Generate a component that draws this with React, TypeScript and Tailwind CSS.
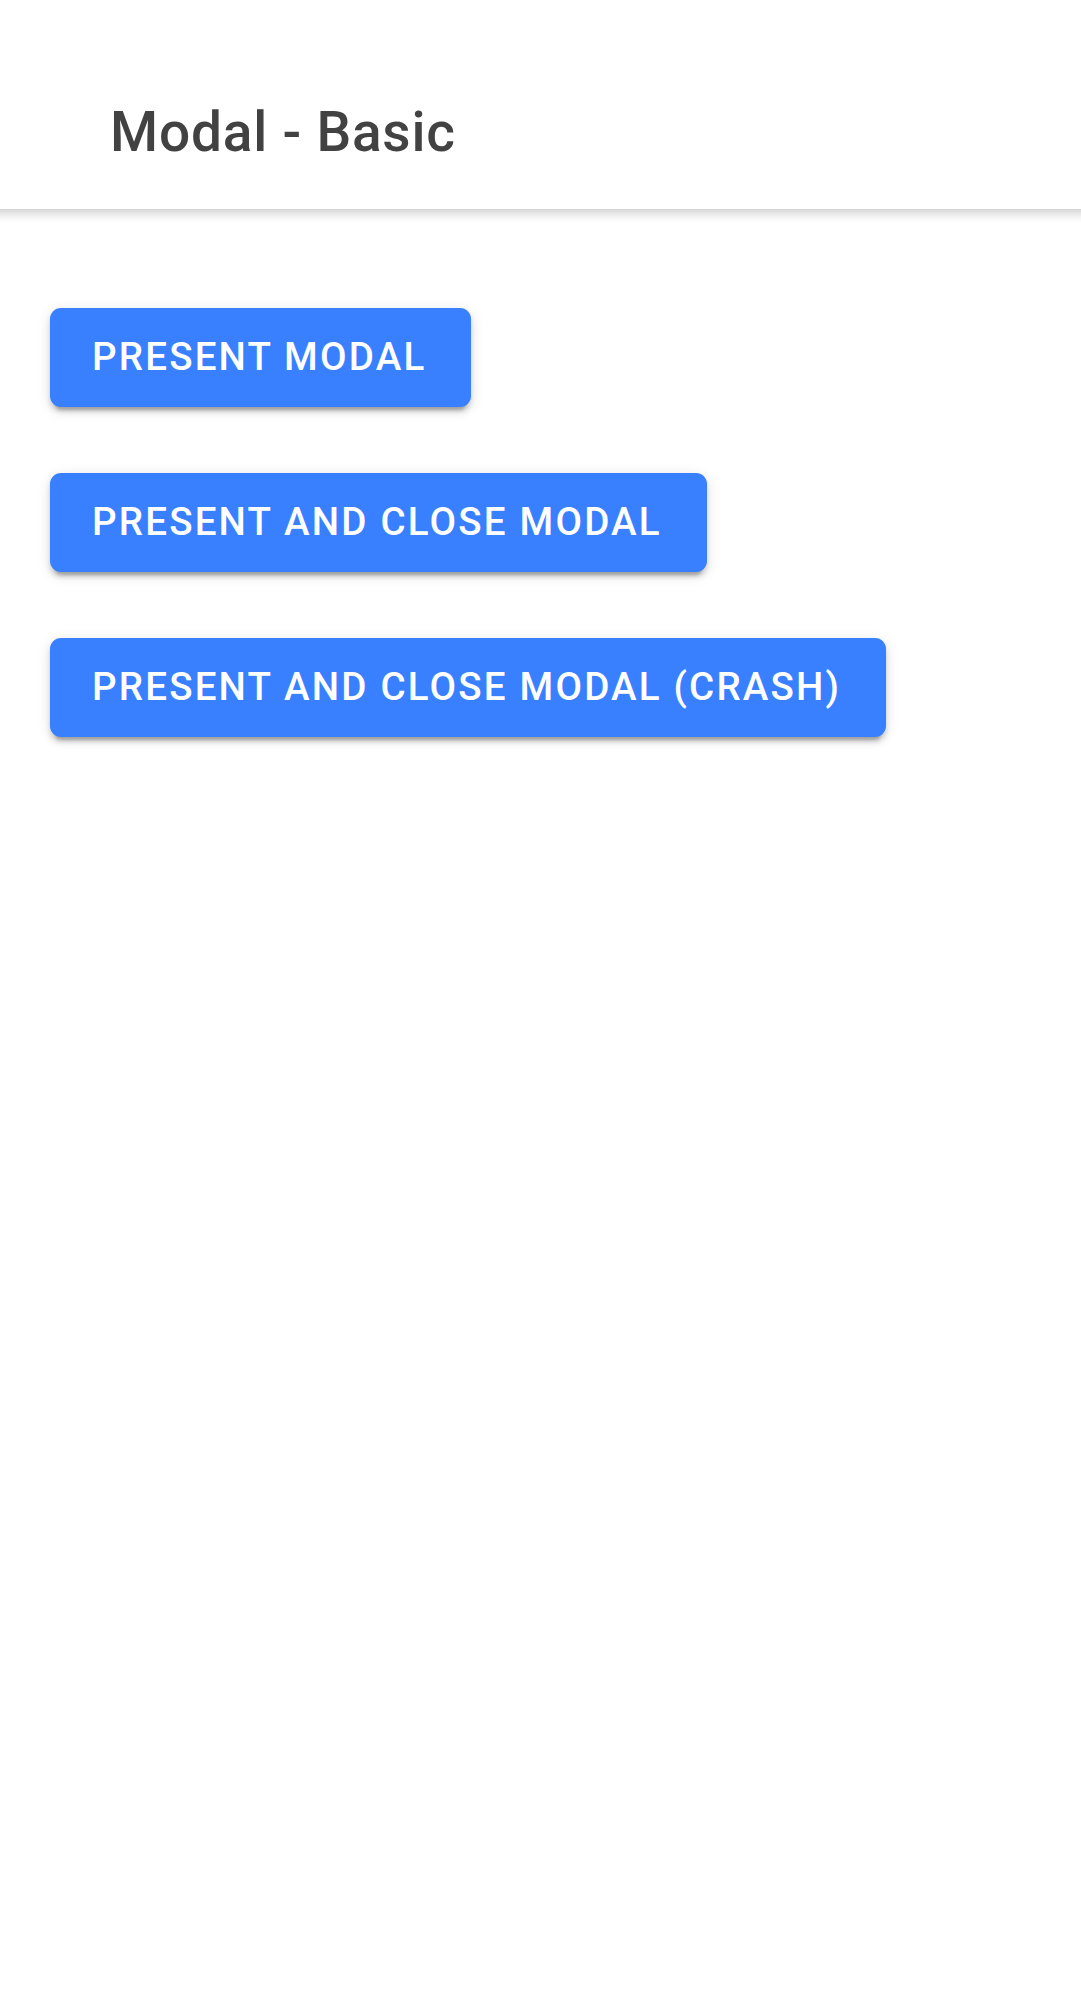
import React from "react";

const labels = [
  "PRESENT MODAL",
  "PRESENT AND CLOSE MODAL",
  "PRESENT AND CLOSE MODAL (CRASH)",
];

export default function App() {
  return (
    <div
      className="min-h-[1999px] w-full bg-white"
      style={{ fontFamily: "Roboto, 'Noto Sans', sans-serif" }}
    >
      <header className="relative z-10 bg-white pt-[55px]">
        <div className="flex h-[154px] items-center pl-[110px]">
          <h1 className="text-[55px] font-medium leading-none tracking-[0.8px] text-[#424242]">
            Modal - Basic
          </h1>
        </div>
        <div className="absolute left-0 right-0 top-full h-[14px] bg-gradient-to-b from-[rgba(0,0,0,0.16)] via-[rgba(0,0,0,0.05)] to-transparent" />
      </header>
      <main className="flex flex-col items-start gap-[66px] px-[50px] pt-[99px]">
        {labels.map((l) => (
          <button
            key={l}
            className="flex h-[99px] items-center rounded-[11px] bg-[#3880ff] pl-[42px] pr-[45px] text-[38.5px] font-medium leading-none tracking-[2.2px] text-white shadow-[0_8px_3px_-5px_rgba(0,0,0,0.2),0_5px_5px_0_rgba(0,0,0,0.14),0_3px_14px_0_rgba(0,0,0,0.12)]"
          >
            {l}
          </button>
        ))}
      </main>
    </div>
  );
}
